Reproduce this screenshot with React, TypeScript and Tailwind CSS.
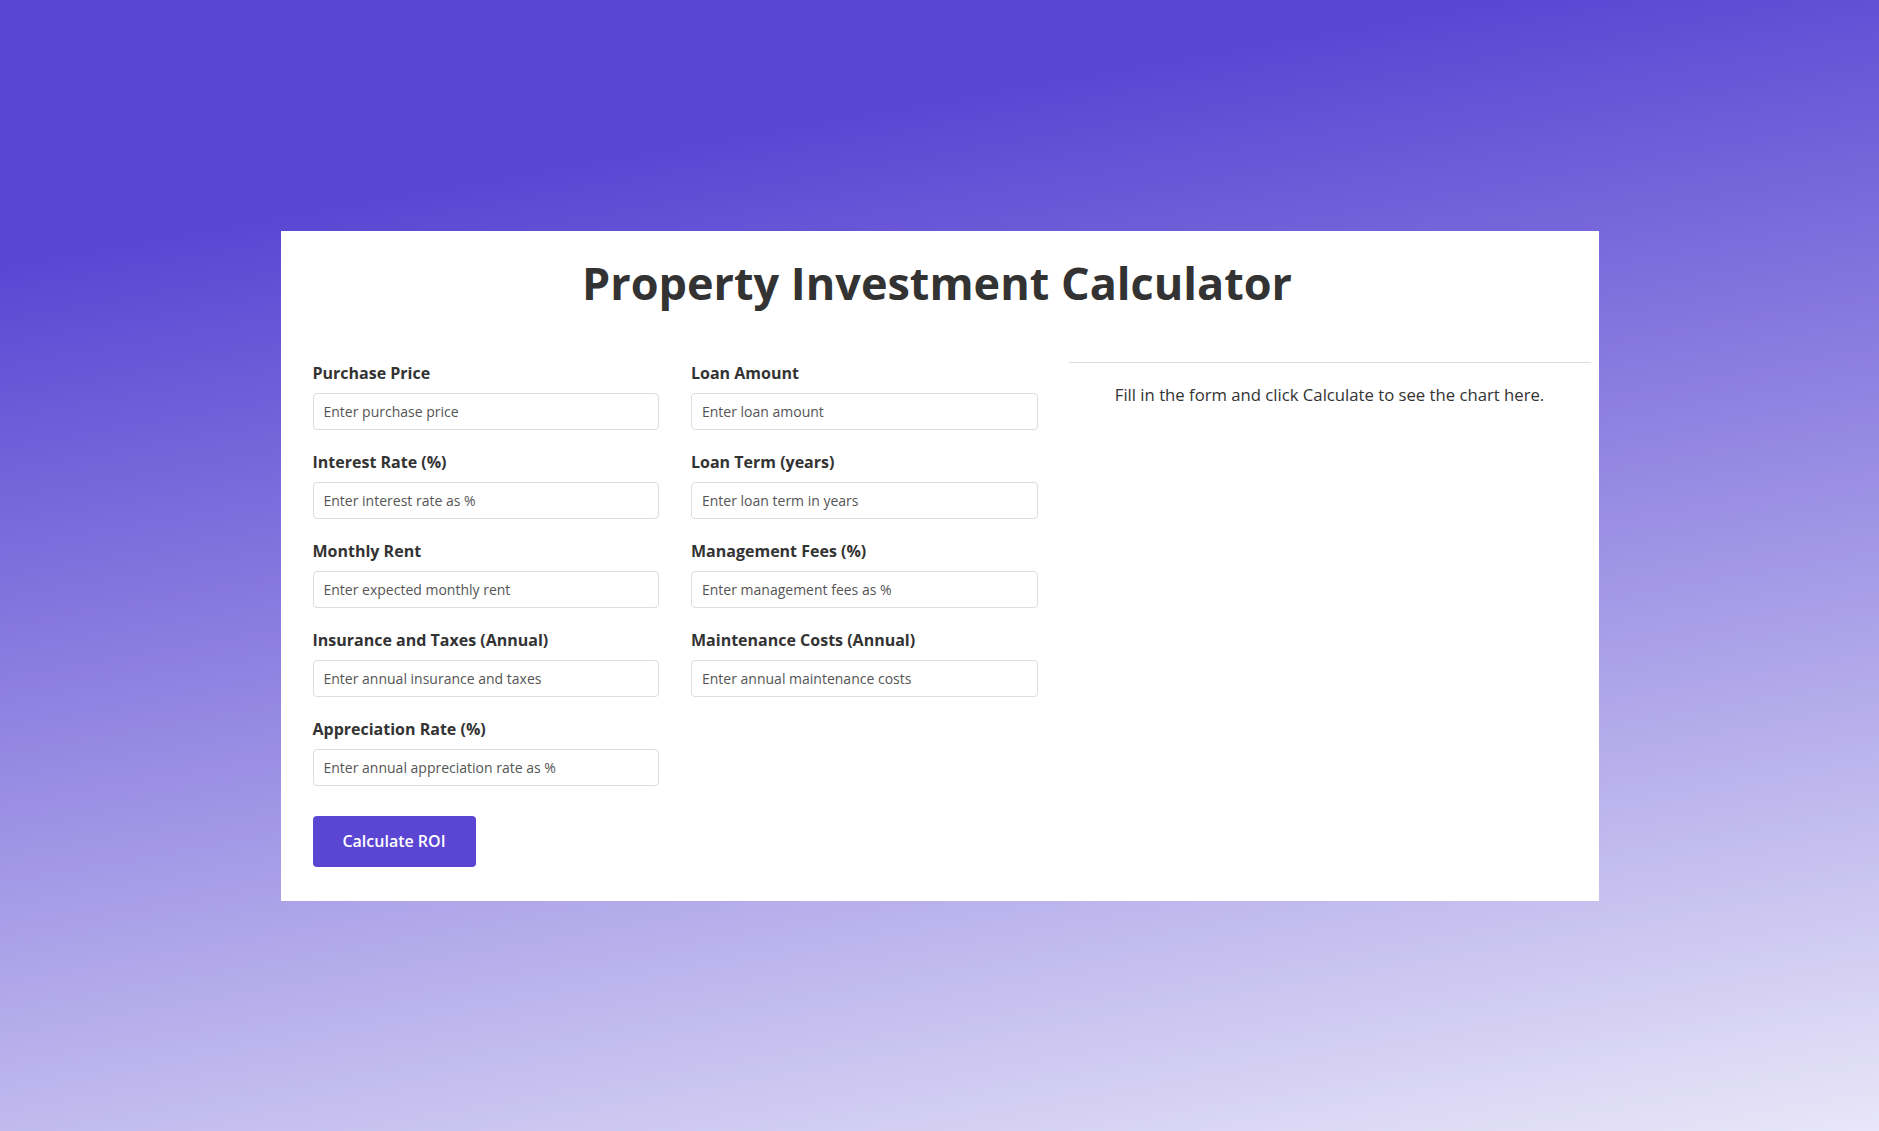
import { FC } from "react";

interface Field {
  readonly label: string;
  readonly placeholder: string;
}

const fields: Field[] = [
  { label: "Purchase Price", placeholder: "Enter purchase price" },
  { label: "Loan Amount", placeholder: "Enter loan amount" },
  { label: "Interest Rate (%)", placeholder: "Enter interest rate as %" },
  { label: "Loan Term (years)", placeholder: "Enter loan term in years" },
  { label: "Monthly Rent", placeholder: "Enter expected monthly rent" },
  { label: "Management Fees (%)", placeholder: "Enter management fees as %" },
  { label: "Insurance and Taxes (Annual)", placeholder: "Enter annual insurance and taxes" },
  { label: "Maintenance Costs (Annual)", placeholder: "Enter annual maintenance costs" },
  { label: "Appreciation Rate (%)", placeholder: "Enter annual appreciation rate as %" },
];

const FormField: FC<Field> = ({ label, placeholder }) => (
  <div className="flex flex-col">
    <label className="text-[16px] font-bold leading-[25px] mb-[7px] text-[#333]">{label}</label>
    <input
      type="number"
      placeholder={placeholder}
      className="h-[37px] w-full rounded border border-[#ddd] bg-white px-[10px] text-[14px] text-[#333] placeholder:text-[#555] outline-none"
    />
  </div>
);

export default function App() {
  return (
    <div className="min-h-screen flex items-center justify-center bg-[linear-gradient(170deg,#5b46d3_18%,#e8e6f8_100%)] font-['Open_Sans',sans-serif] text-[#333]">
      <div className="w-[1318px] bg-white pt-[24px] pb-[34px]">
        <h1 className="pl-8 pr-[37px] text-center text-[45px] font-bold leading-[56px] mb-[50px] text-[#333]">
          Property Investment Calculator
        </h1>
        <div className="flex pl-8 pr-2">
          <form className="w-[725px] shrink-0" onSubmit={(e) => e.preventDefault()}>
            <div className="grid grid-cols-2 gap-x-8 gap-y-5">
              {fields.map((f) => (
                <FormField key={f.label} label={f.label} placeholder={f.placeholder} />
              ))}
            </div>
            <button
              type="submit"
              className="mt-[30px] h-[51px] w-[163px] rounded bg-[#5b46d3] text-[16px] font-semibold text-white"
            >
              Calculate ROI
            </button>
          </form>
          <div className="ml-[31px] flex-1 self-start mt-px border-t border-[#ddd] pt-[19px]">
            <p className="text-center text-[16.7px] leading-[25px] text-[#333]">
              Fill in the form and click Calculate to see the chart here.
            </p>
          </div>
        </div>
      </div>
    </div>
  );
}
